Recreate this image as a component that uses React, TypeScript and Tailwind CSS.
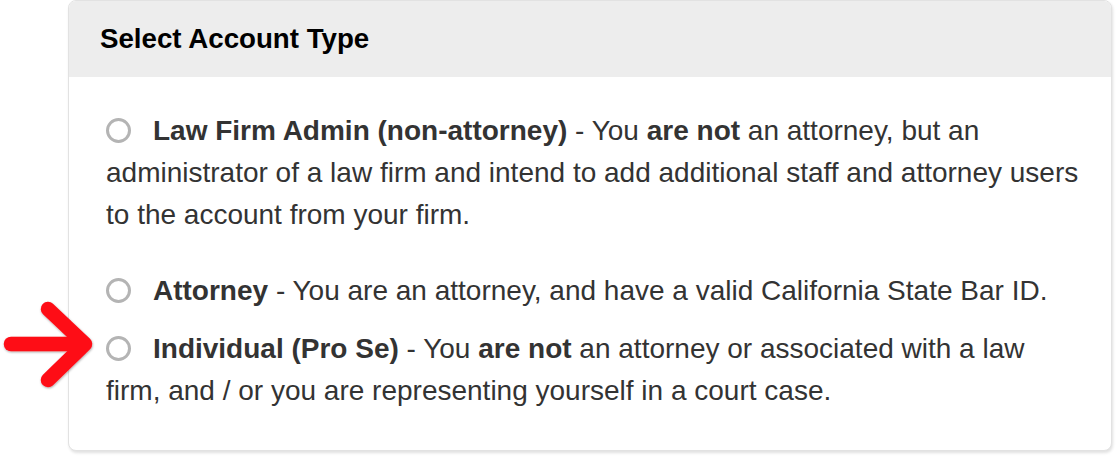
import React from "react";

function Radio() {
  return (
    <span className="inline-block w-[25px] h-[25px] rounded-full border-[3px] border-[#b4b4b4] bg-white align-[-3px] mr-[22px]" />
  );
}

export default function App() {
  return (
    <div
      className="relative w-[1116px] h-[456px] bg-white overflow-hidden"
      style={{ fontFamily: '"Liberation Sans", Arial, Helvetica, sans-serif' }}
    >
      <div className="ml-[68px] w-[1044px] h-[451px] rounded-[8px] border border-[#e2e2e2] bg-white shadow-[1px_2px_3px_rgba(0,0,0,0.12)] overflow-hidden">
        <div className="h-[76px] bg-[#ededed] flex items-center pl-[31px]">
          <h2 className="text-[27.7px] font-bold text-black leading-none">Select Account Type</h2>
        </div>
        <div className="pl-[37px] pr-[31px] pt-[33px] text-[28px] leading-[42px] text-[#333]">
          <p>
            <Radio />
            <b>Law Firm Admin (non-attorney)</b> - You <b>are not</b> an attorney, but an administrator of a law firm and intend to add additional staff and attorney users to the account from your firm.
          </p>
          <p className="mt-[34px]">
            <Radio />
            <b>Attorney</b> - You are an attorney, and have a valid California State Bar ID.
          </p>
          <p className="mt-[16px]">
            <Radio />
            <b>Individual (Pro Se)</b> - You <b>are not</b> an attorney or associated with a law firm, and / or you are representing yourself in a court case.
          </p>
        </div>
      </div>
      <svg
        className="absolute left-0 top-[296px]"
        width="100"
        height="100"
        viewBox="0 0 100 100"
      >
        <defs>
          <filter id="sh" x="-20%" y="-20%" width="140%" height="140%">
            <feDropShadow dx="0.5" dy="1" stdDeviation="1.2" floodColor="#000" floodOpacity="0.35" />
          </filter>
        </defs>
        <g filter="url(#sh)" stroke="#fe0a17" strokeWidth="14.5" fill="none">
          <line x1="11" y1="48" x2="82" y2="48" strokeLinecap="round" />
          <polyline points="48,13 85,48 48,84" strokeLinecap="round" strokeLinejoin="round" />
        </g>
      </svg>
    </div>
  );
}
